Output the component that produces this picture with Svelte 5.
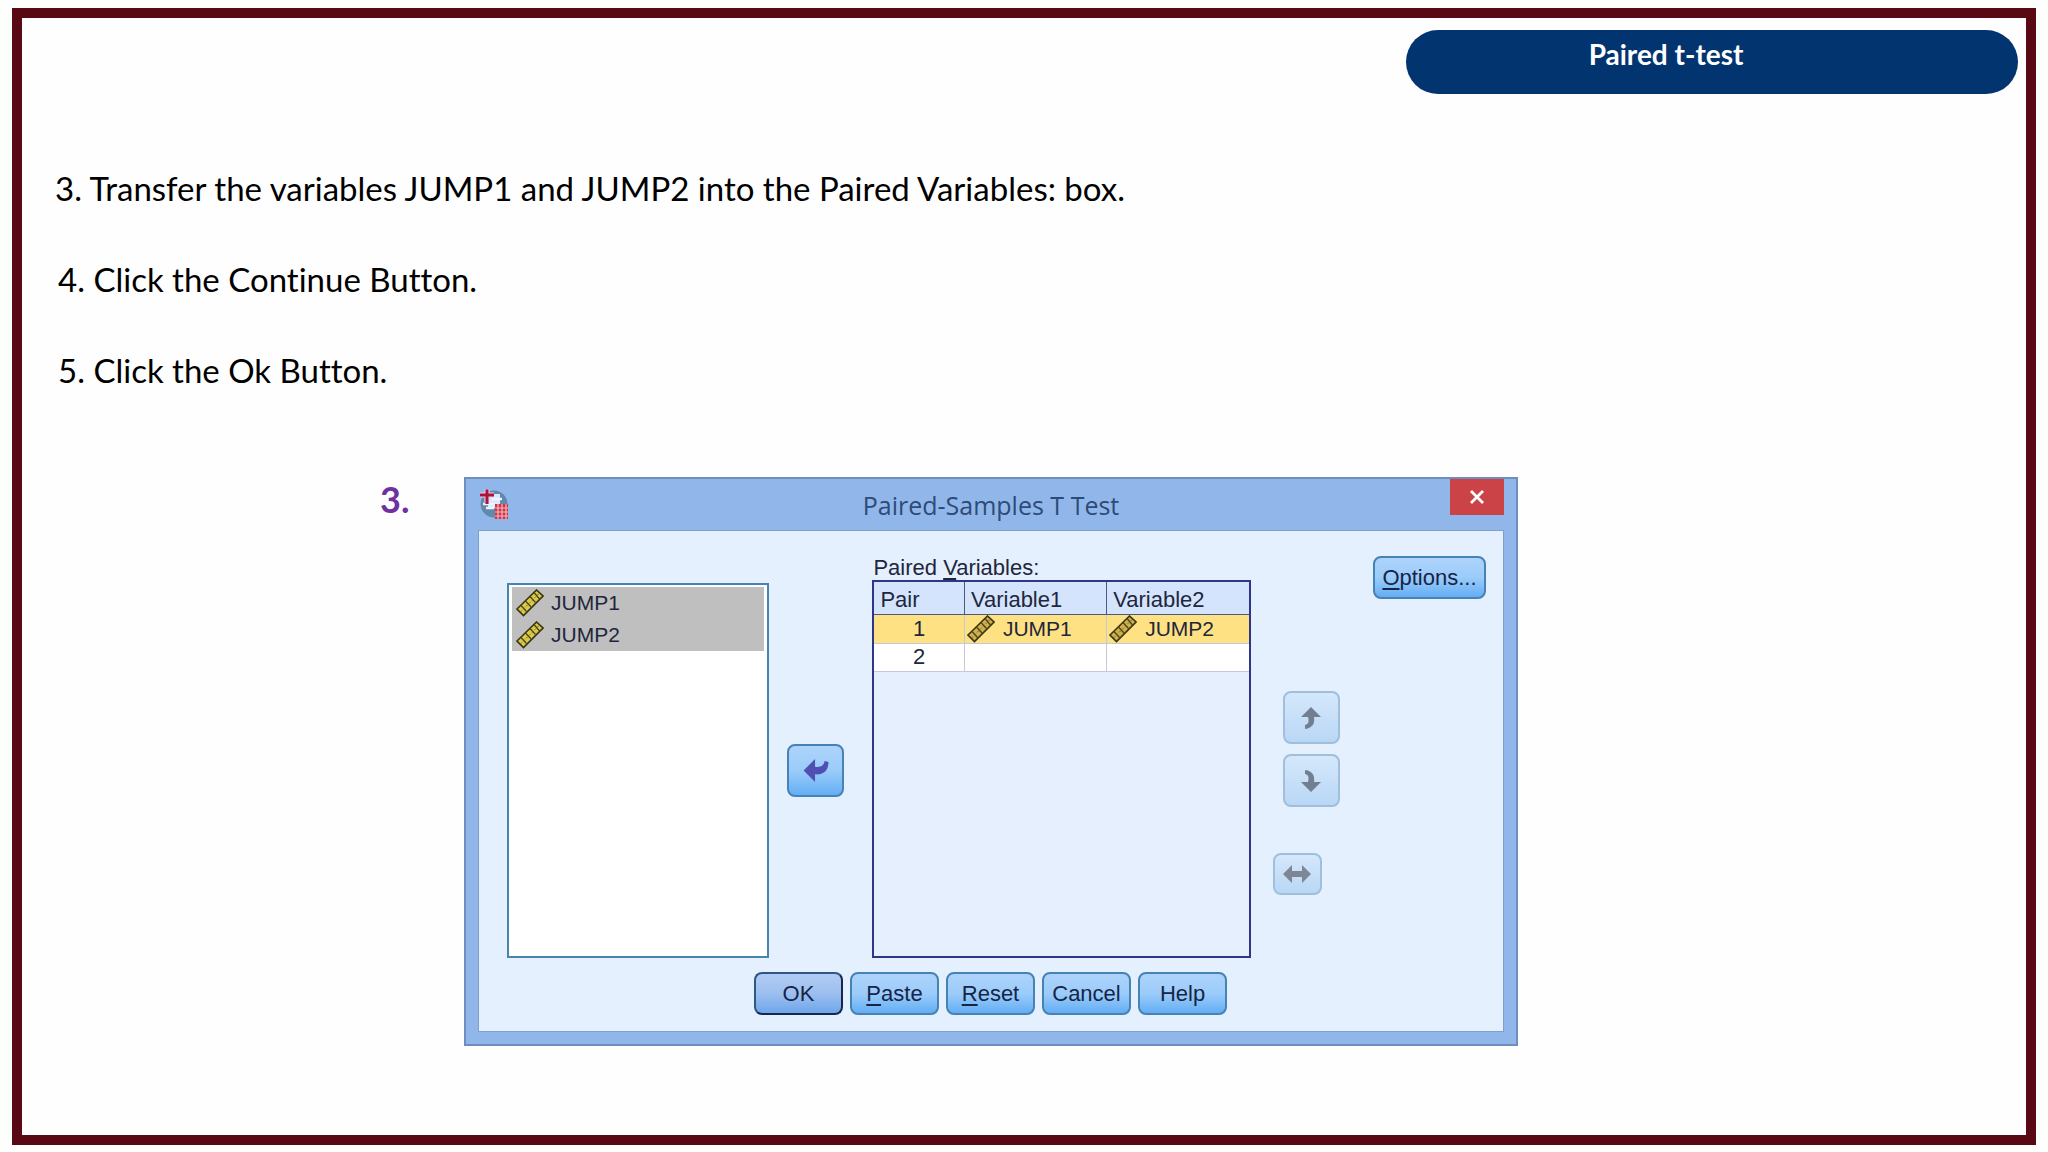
<script lang="ts">
	interface Step {
		number: number
		text: string
	}

	const steps: Step[] = [
		{ number: 3, text: 'Transfer the variables JUMP1 and JUMP2 into the Paired Variables: box.' },
		{ number: 4, text: 'Click the Continue Button.' },
		{ number: 5, text: 'Click the Ok Button.' },
	]

	const variables = ['JUMP1', 'JUMP2']

	const pairs = [
		{ id: 1, first: 'JUMP1', second: 'JUMP2' },
		{ id: 2, first: '', second: '' },
	]

	const actions = [
		{ key: '', rest: 'OK' },
		{ key: 'P', rest: 'aste' },
		{ key: 'R', rest: 'eset' },
		{ key: '', rest: 'Cancel' },
		{ key: '', rest: 'Help' },
	]

	let selectedPair = $state(1)
</script>

{#snippet ruler(fill: string)}
	<svg class="ruler" viewBox="0 0 28 28" width="28" height="28" aria-hidden="true">
		<path d="M1 20 L20.5 1 L27 7 L7.5 26.5 Z" fill={fill} stroke="#3b3413" stroke-width="1.6" />
		<path
			d="M5 16.5 L10.5 22.5 M9.5 12 L15 18 M14 7.5 L19.5 13.5 M18 3.5 L23.5 10"
			stroke="#4d4417"
			stroke-width="1.3"
		/>
		<path d="M4.5 23 L23.5 4" stroke="#6b5f20" stroke-width="0.9" stroke-dasharray="2 2" />
	</svg>
{/snippet}

{#snippet cell(name: string)}
	{#if name}
		<span class="variable">{@render ruler('#cdb04e')}{name}</span>
	{/if}
{/snippet}

<main class="slide">
	<header>
		<h1>Paired t-test</h1>
	</header>

	<div class="steps">
		{#each steps as step}
			<p>{step.number}. {step.text}</p>
		{/each}
	</div>

	<div class="figure">
		<strong class="marker">3.</strong>

		<section class="dialog" aria-labelledby="dialog-title">
			<div class="titlebar">
				<svg class="logo" viewBox="0 0 32 32" width="32" height="32" aria-hidden="true">
					<circle cx="16" cy="16" r="13.5" fill="#6189ac" />
					<path d="M10 6 H22 V20 H10 Z" fill="#dce9fa" />
					<path d="M5 16 H16 M8 20 H16 M14 11 H24" stroke="#eef4ff" stroke-width="2.5" />
					<path d="M9 1.5 V16 M2 7 H16" stroke="#e8d3e8" stroke-width="5" />
					<path d="M9 1.5 V16 M2 7 H16" stroke="#ad123f" stroke-width="3" />
					<rect x="17" y="16" width="13" height="15" fill="#cf3344" />
					<path
						d="M17 20 H30 M17 24 H30 M17 28 H30 M20 16 V31 M24 16 V31 M28 16 V31"
						stroke="#f6b8c2"
						stroke-width="1.2"
					/>
				</svg>
				<h2 id="dialog-title">Paired-Samples T Test</h2>
				<button class="close" aria-label="Close">
					<svg viewBox="0 0 14 14" width="14" height="14">
						<path d="M1 1 L13 13 M13 1 L1 13" stroke="#fff" stroke-width="2.8" />
					</svg>
				</button>
			</div>

			<div class="body">
				<div class="columns">
					<ul class="source" role="listbox" aria-label="Variables" aria-multiselectable="true">
						{#each variables as name}
							<li role="option" aria-selected="true">{@render ruler('#d8cb4c')}{name}</li>
						{/each}
					</ul>

					<div class="transfer">
						<button class="arrow" aria-label="Move variables">
							<svg viewBox="0 0 26 24" width="26" height="23">
								<path
									d="M0 12 L12 0 V8 C18 9 21 7 22 2 L26 3 C26 12 21 17 12 16 V24 Z"
									fill="#5050b4"
								/>
							</svg>
						</button>
					</div>

					<div class="target">
						<span id="pairs-label">Paired <u>V</u>ariables:</span>
						<div class="grid">
							<table aria-labelledby="pairs-label">
								<thead>
									<tr><th>Pair</th><th>Variable1</th><th>Variable2</th></tr>
								</thead>
								<tbody>
									{#each pairs as pair}
										<tr
											class:selected={pair.id === selectedPair}
											onclick={() => (selectedPair = pair.id)}
										>
											<td>{pair.id}</td>
											<td>{@render cell(pair.first)}</td>
											<td>{@render cell(pair.second)}</td>
										</tr>
									{/each}
								</tbody>
							</table>
						</div>
					</div>

					<div class="order">
						<button class="arrow" aria-label="Move pair up" disabled>
							<svg viewBox="0 0 20 22" width="20" height="22">
								<path d="M10 0 L20 10 H13 C14 16 12 21 4 22 L4 18 C8 17 8 14 7 10 H0 Z" fill="#737f91" />
							</svg>
						</button>
						<button class="arrow" aria-label="Move pair down" disabled>
							<svg viewBox="0 0 20 22" width="20" height="22">
								<path d="M10 22 L20 12 H13 C14 6 12 1 4 0 L4 4 C8 5 8 8 7 12 H0 Z" fill="#737f91" />
							</svg>
						</button>
						<button class="arrow swap" aria-label="Swap variables" disabled>
							<svg viewBox="0 0 28 18" width="28" height="18">
								<path
									d="M0 9 L9 0 V6 H19 V0 L28 9 L19 18 V12 H9 V18 Z"
									fill="#7e8594"
								/>
							</svg>
						</button>
					</div>

					<button class="options"><u>O</u>ptions...</button>
				</div>

				<div class="actions">
					{#each actions as action, i}
						<button class:default={i === 0}><u>{action.key}</u>{action.rest}</button>
					{/each}
				</div>
			</div>
		</section>
	</div>
</main>

<style>
	:global(body) {
		background: #fdfffd;
	}

	* {
		box-sizing: border-box;
	}

	.slide {
		min-height: calc(100vh - 15px);
		margin: 8px 12px 0;
		border: 10px solid #590913;
		background: #fefefe;
		font-family: Lato, 'Open Sans', sans-serif;
		font-variant-ligatures: none;
		color: #000;
	}

	header {
		display: flex;
		justify-content: flex-end;
		padding: 12px 8px 0;
	}

	h1 {
		width: 612px;
		height: 64px;
		margin: 0;
		padding-right: 92px;
		border-radius: 32px;
		background: #02346f;
		color: #fff;
		font-size: 28px;
		font-weight: 700;
		line-height: 48px;
		text-align: center;
	}

	.steps {
		display: flex;
		flex-direction: column;
		gap: 51px;
		padding: 74px 32px 0 36px;
	}

	.steps p {
		margin: 0;
		font-size: 33px;
		line-height: 40px;
	}

	.steps p:first-child {
		margin-left: -3px;
	}

	.figure {
		display: grid;
		grid-template-columns: 84px minmax(0, 1054px);
		padding: 87px 32px 75px 358px;
	}

	.marker {
		color: #7030a0;
		font-size: 36px;
		line-height: 44px;
	}

	.dialog {
		padding: 0 12px 12px;
		border: 2px solid #6e8fbd;
		background: #91b7ea;
		font-family: 'Liberation Sans', Arial, sans-serif;
		font-size: 22px;
		color: #22263c;
	}

	.titlebar {
		display: grid;
		grid-template-columns: 54px 1fr 54px;
		height: 51px;
	}

	.logo {
		margin-top: 9px;
	}

	h2 {
		margin: 0;
		color: #2d4b78;
		font-family: 'Open Sans', sans-serif;
		font-size: 25px;
		font-weight: 400;
		line-height: 52px;
		text-align: center;
	}

	button {
		padding: 0;
		border: 2px solid #4682b4;
		border-radius: 8px;
		background: linear-gradient(#add3fb, #9bccfa 50%, #64aef4);
		color: #172448;
		font: inherit;
	}

	.close {
		display: grid;
		place-items: center;
		height: 36px;
		border: 0;
		border-radius: 0;
		background: #cb4347;
	}

	.body {
		padding: 25px 17px 16px 28px;
		border: 1px solid #7e9fc8;
		background: #e4f0fe;
	}

	.columns {
		display: grid;
		grid-template-columns: minmax(0, 262fr) 103px minmax(0, 378fr) 122px 113px;
		min-height: 402px;
	}

	.source {
		margin: 27px 0 0;
		padding: 2px 3px;
		border: 2px solid #4884ab;
		background: #fff;
		list-style: none;
	}

	.source li {
		display: flex;
		align-items: center;
		gap: 7px;
		height: 32px;
		padding-left: 4px;
		background: #bfbfbf;
		font-size: 21px;
	}

	.transfer {
		padding: 188px 0 0 18px;
	}

	.arrow {
		display: grid;
		place-items: center;
		width: 57px;
		height: 53px;
	}

	.arrow:disabled {
		border-color: #9fbfdc;
		background: linear-gradient(#d5e8fb, #b9d7f5);
	}

	.target {
		display: flex;
		flex-direction: column;
	}

	.target > span {
		padding-left: 1px;
		line-height: 24px;
	}

	.grid {
		flex: 1;
		border: 2px solid #30358c;
		background: #e5effe;
	}

	table {
		width: 100%;
		border-collapse: collapse;
		table-layout: fixed;
	}

	th,
	td {
		height: 28px;
		padding: 0;
		border-right: 1px solid #c3c8dd;
		border-bottom: 1px solid #c3c8dd;
		line-height: 26px;
		white-space: nowrap;
	}

	th {
		height: 32px;
		padding: 4px 0 0 6px;
		border-color: #4a5a80;
		background: #d3e4fc;
		font-weight: 400;
		text-align: left;
	}

	th:first-child {
		width: 90px;
	}

	th:last-child,
	td:last-child {
		border-right: 0;
	}

	td {
		background: #fff;
	}

	td:first-child {
		text-align: center;
	}

	.selected td {
		background: #fde182;
	}

	.variable {
		display: flex;
		align-items: center;
		gap: 8px;
		padding-left: 2px;
		font-size: 21px;
	}

	.ruler {
		flex: none;
	}

	.order {
		display: flex;
		flex-direction: column;
		gap: 10px;
		padding: 135px 0 0 32px;
	}

	.swap {
		width: 49px;
		height: 42px;
		margin: 36px 0 0 -10px;
	}

	.options,
	.actions button {
		height: 43px;
	}

	.actions {
		display: flex;
		justify-content: center;
		gap: 7px;
		padding: 14px 12px 0 0;
	}

	.actions button {
		width: 89px;
	}

	.actions .default {
		border-color: #2e5687 #17264f #17264f #2e5687;
		background: linear-gradient(#b1ccf3, #9dbff0 50%, #6fa6ea);
	}

	u {
		text-underline-offset: 3px;
		text-decoration-thickness: 2px;
	}
</style>
